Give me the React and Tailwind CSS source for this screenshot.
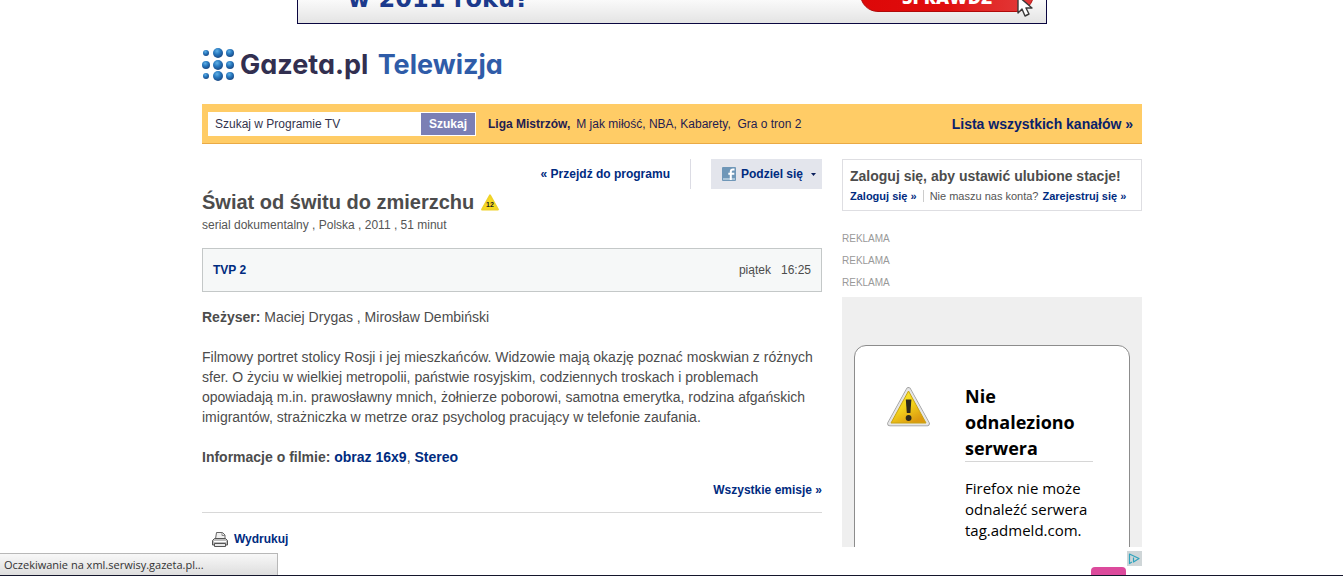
import React from "react";

const hotTopics = [
  { label: "M jak miłość", after: ", " },
  { label: "NBA", after: ", " },
  { label: "Kabarety", after: ",\u00a0 " },
  { label: "Gra o tron 2", after: "" },
];

const logoDots = [
  { x: 4, y: 5, r: 3 },
  { x: 16, y: 5, r: 5 },
  { x: 28, y: 5, r: 4 },
  { x: 4, y: 17, r: 4 },
  { x: 16, y: 17, r: 5 },
  { x: 28, y: 17, r: 4 },
  { x: 4, y: 28, r: 3 },
  { x: 16, y: 28, r: 5 },
  { x: 28, y: 28, r: 4 },
];

const CursorIcon = () => (
  <svg width="18" height="24" viewBox="0 0 18 24" className="block">
    <path
      d="M2 1v17l4-4 3 7 4-2-3-6h6z"
      fill="#fff"
      stroke="#3a3a3a"
      strokeWidth="1.4"
      strokeLinejoin="round"
    />
  </svg>
);

const LogoDots = () => (
  <svg width="33" height="34" viewBox="0 0 33 34" className="block shrink-0">
    <defs>
      <radialGradient id="dot" cx="0.4" cy="0.3" r="0.7">
        <stop offset="0" stopColor="#5fb0e6" />
        <stop offset="0.5" stopColor="#2777bd" />
        <stop offset="1" stopColor="#1a4a86" />
      </radialGradient>
    </defs>
    {logoDots.map((dot, index) => (
      <circle key={index} cx={dot.x} cy={dot.y} r={dot.r} fill="url(#dot)" />
    ))}
  </svg>
);

const FacebookIcon = () => (
  <svg width="14" height="14" viewBox="0 0 14 14" className="block">
    <rect width="14" height="14" rx="1" fill="#6f97b8" />
    <rect x="1" y="11" width="12" height="2" fill="#a9c4d8" />
    <path d="M12.5 2.5h-1.4q-2.3 0-2.3 2.3V13M6.3 6.8h6" fill="none" stroke="#fff" strokeWidth="2" />
  </svg>
);

const AgeIcon = () => (
  <svg width="18" height="17" viewBox="0 0 18 17" role="img" aria-label="12" className="block">
    <path
      d="M9 1.2 17 15.5H1z"
      fill="#f9dc1c"
      stroke="#efd22a"
      strokeWidth="1.8"
      strokeLinejoin="round"
    />
    <text x="9" y="13" textAnchor="middle" fontSize="7" fontWeight="bold" fontFamily="Liberation Sans, sans-serif" fill="#222">
      12
    </text>
  </svg>
);

const WarningIcon = () => (
  <svg width="43" height="40" viewBox="0 0 43 40" className="block">
    <defs>
      <linearGradient id="warn" x1="0" y1="0" x2="0.6" y2="1">
        <stop offset="0" stopColor="#fdf03a" />
        <stop offset="0.55" stopColor="#f3d31c" />
        <stop offset="1" stopColor="#dc9a10" />
      </linearGradient>
    </defs>
    <path
      d="M21.5 3 40 36.5H3z"
      fill="#999"
      stroke="#999"
      strokeWidth="5.5"
      strokeLinejoin="round"
    />
    <path d="M21.5 3 40 36.5H3z" fill="#e6e6e6" stroke="#e6e6e6" strokeWidth="4" strokeLinejoin="round" />
    <path d="M21.5 4 39 36H4z" fill="url(#warn)" stroke="#c9a413" strokeWidth="1" strokeLinejoin="round" />
    <path d="M18.8 12.5h5.6l-1 13.5h-3.6z" fill="#2d2a1c" />
    <circle cx="21.6" cy="31" r="2.9" fill="#2d2a1c" />
  </svg>
);

const PrinterIcon = () => (
  <svg width="16" height="17" viewBox="0 0 16 17" className="block">
    <path d="M3.5 8 4.5 1.5h6L13 4v4z" fill="#f0f0f0" stroke="#666" strokeLinejoin="round" />
    <path d="M10 1.5v3h3" fill="none" stroke="#888" />
    <path d="M2.5 7.5h11l2 2V14H.5V9.500z" fill="#bdbdbd" stroke="#555" strokeLinejoin="round" />
    <path d="M2 10.5h12" stroke="#fff" />
    <path d="M2.5 12.5h11v3h-11z" fill="#e8e8e8" stroke="#555" strokeLinejoin="round" />
  </svg>
);

const AdChoicesIcon = () => (
  <svg width="15" height="15" viewBox="0 0 15 15" className="block">
    <rect width="15" height="15" fill="#cfd6d8" />
    <path d="M5 11 2.5 12.5V3L12 7.5 6.5 11V6.5" fill="none" stroke="#2fa3bd" strokeWidth="1.2" strokeLinejoin="round" />
  </svg>
);

const Banner = () => (
  <div className="mx-auto flex h-6 max-w-[750px] items-end justify-between overflow-hidden border border-t-0 border-[#0a0640] bg-gradient-to-b from-[#fafafa] to-[#e4e4e4] pl-[50px] pr-3">
    <p className="pb-2 font-[DejaVu_Sans,sans-serif] text-2xl font-bold leading-8 text-[#1c3a8c]">
      w 2011 roku?
    </p>
    <div className="relative pb-[11px]">
      <a
        href="#sprawdz"
        className="flex h-10 w-[174px] items-end justify-center rounded-[18px] border border-[#b00a0a] bg-gradient-to-r from-[#dd0808] via-[#e00d0d] to-[#e23a3a] pb-[2px] font-[Open_Sans,sans-serif] text-lg font-extrabold leading-6 text-white"
      >
        SPRAWDŹ
      </a>
      <span className="absolute bottom-1 right-0">
        <CursorIcon />
      </span>
    </div>
  </div>
);

const SearchBar = () => (
  <div className="flex h-10 items-center justify-between border-b border-[#eaaa45] bg-[#ffcc66] pl-[6px] pr-[9px]">
    <div className="flex items-center">
      <form className="flex h-6 items-center bg-white pr-px" onSubmit={(e) => e.preventDefault()}>
        <input
          type="text"
          aria-label="Szukaj w Programie TV"
          defaultValue="Szukaj w Programie TV"
          className="w-[213px] px-[7px] text-xs text-[#33334d] outline-none"
        />
        <button
          type="submit"
          className="h-[22px] w-[54px] bg-[#7b7fb5] text-xs font-bold text-white"
        >
          Szukaj
        </button>
      </form>
      <p className="ml-3 text-xs text-[#1f2050]">
        <a href="#liga" className="mr-[6px] font-bold">Liga Mistrzów,</a>
        {hotTopics.map((topic) => (
          <React.Fragment key={topic.label}>
            <a href="#temat">{topic.label}</a>
            {topic.after}
          </React.Fragment>
        ))}
      </p>
    </div>
    <a href="#kanaly" className="text-sm font-bold text-[#0a1f6b]">
      Lista wszystkich kanałów »
    </a>
  </div>
);

const Programme = () => (
  <main className="min-w-0 flex-1">
    <div className="flex h-[30px] items-center justify-end text-xs font-bold text-[#002b7f]">
      <a href="#program">« Przejdź do programu</a>
      <span className="mx-5 h-full w-px bg-[#dcdce4]" />
      <button type="button" className="flex h-full items-center bg-[#e3e5ec] pl-[11px] pr-[6px]">
        <FacebookIcon />
        <span className="ml-[5px]">Podziel się</span>
        <svg width="5" height="3" viewBox="0 0 5 3" className="ml-2">
          <path d="M0 0h5L2.5 3z" fill="#0a1f5c" />
        </svg>
      </button>
    </div>

    <div className="flex h-[26px] items-center">
      <h1 className="mr-[7px] text-xl font-bold text-[#4c4c4c]">Świat od świtu do zmierzchu</h1>
      <AgeIcon />
    </div>
    <p className="text-xs leading-5 text-[#555]">serial dokumentalny , Polska , 2011 , 51 minut</p>

    <div className="mt-[13px] flex h-11 items-center justify-between border border-[#c4c8c8] bg-[#f6f8f8] px-[10px] text-xs">
      <a href="#tvp2" className="font-bold text-[#002b7f]">TVP 2</a>
      <div className="flex gap-[10px] text-[#4c4c4c]">
        <span>piątek</span>
        <span>16:25</span>
      </div>
    </div>

    <div className="mt-[15px] text-sm leading-5 text-[#4c4c4c]">
      <p>
        <b>Reżyser:</b> Maciej Drygas , Mirosław Dembiński
      </p>
      <p className="my-5">
        Filmowy portret stolicy Rosji i jej mieszkańców. Widzowie mają okazję poznać moskwian z różnych
        sfer. O życiu w wielkiej metropolii, państwie rosyjskim, codziennych troskach i problemach
        opowiadają m.in. prawosławny mnich, żołnierze poborowi, samotna emerytka, rodzina afgańskich
        imigrantów, strażniczka w metrze oraz psycholog pracujący w telefonie zaufania.
      </p>
      <p>
        <b>Informacje o filmie:</b>{" "}
        <a href="#obraz" className="font-bold text-[#002b7f]">obraz 16x9</a>,{" "}
        <a href="#stereo" className="font-bold text-[#002b7f]">Stereo</a>
      </p>
    </div>

    <div className="mt-[13px] border-b border-[#d8d8d8] pb-3 text-right text-xs leading-5 font-bold text-[#002b7f]">
      <a href="#emisje">Wszystkie emisje »</a>
    </div>
    <a href="#drukuj" className="mt-4 ml-[10px] inline-flex items-center gap-[6px] text-xs leading-5 font-bold text-[#002b7f]">
      <PrinterIcon />
      Wydrukuj
    </a>
  </main>
);

const Sidebar = () => (
  <aside className="w-[300px] shrink-0">
    <div className="h-[52px] border border-[#dedee2] px-[7px] pt-[6px]">
      <h2 className="whitespace-nowrap text-sm leading-5 font-bold text-[#4c4c4c]">
        Zaloguj się, aby ustawić ulubione stacje!
      </h2>
      <p className="flex items-center whitespace-nowrap text-[11px] leading-5 text-[#555]">
        <a href="#zaloguj" className="font-bold text-[#002b7f]">Zaloguj się »</a>
        <span className="mx-[6px] h-3 w-px bg-[#ccc]" />
        <span className="mr-1">Nie maszu nas konta?</span>
        <a href="#rejestracja" className="font-bold text-[#002b7f]">Zarejestruj się »</a>
      </p>
    </div>

    <div className="mt-[17px] mb-[3px] text-[10px] leading-[22px] text-[#999]">
      <p>REKLAMA</p>
      <p>REKLAMA</p>
      <p>REKLAMA</p>
    </div>

    <div className="h-[250px] overflow-hidden bg-[#efefef] px-3 pt-12">
      <div className="flex h-[300px] rounded-xl border border-[#8c8c8c] bg-white pt-[37px] pr-9 pl-8 font-[Open_Sans,sans-serif] text-black">
        <div className="mt-1 w-[78px] shrink-0">
          <WarningIcon />
        </div>
        <div className="min-w-0 flex-1">
          <h3 className="border-b border-[#d6d6d6] text-lg leading-[26px] font-bold">
            Nie odnaleziono serwera
          </h3>
          <p className="mt-4 text-[15px] leading-[21px]">Firefox nie może odnaleźć serwera tag.admeld.com.</p>
        </div>
      </div>
    </div>

    <div className="mt-1 flex justify-end">
      <AdChoicesIcon />
    </div>
    <div className="mt-px mr-4 flex justify-end">
      <span className="h-5 w-[35px] rounded-t bg-[#dc4a9c]" />
    </div>
  </aside>
);

const App = () => {
  return (
    <div className="h-screen overflow-hidden bg-white pl-px font-[Liberation_Sans,Arial,sans-serif]">
      <Banner />

      <div className="mx-auto max-w-[940px]">
        <header className="flex h-20 items-center pt-[2px]">
          <LogoDots />
          <a
            href="#start"
            className="ml-[5px] font-[Inter,sans-serif] text-[27px] font-bold text-[#322f50] [font-feature-settings:'cv11']"
          >
            Gazeta.pl <span className="ml-[3px] text-[#2f5ca8]">Telewizja</span>
          </a>
        </header>

        <SearchBar />

        <div className="mt-[15px] flex gap-5">
          <Programme />
          <Sidebar />
        </div>
      </div>

      {/* Browser status message over the page */}
      <div className="fixed inset-x-0 bottom-0 border-b border-[#14162c]">
        <div className="h-[22px] w-[278px] border-t border-r border-[#b8b8b8] bg-gradient-to-b from-[#f8f8f8] to-[#dedede] pl-1 font-[Open_Sans,sans-serif] text-[11px] leading-[22px] text-[#333]">
          Oczekiwanie na xml.serwisy.gazeta.pl...
        </div>
      </div>
    </div>
  );
};

export default App;
